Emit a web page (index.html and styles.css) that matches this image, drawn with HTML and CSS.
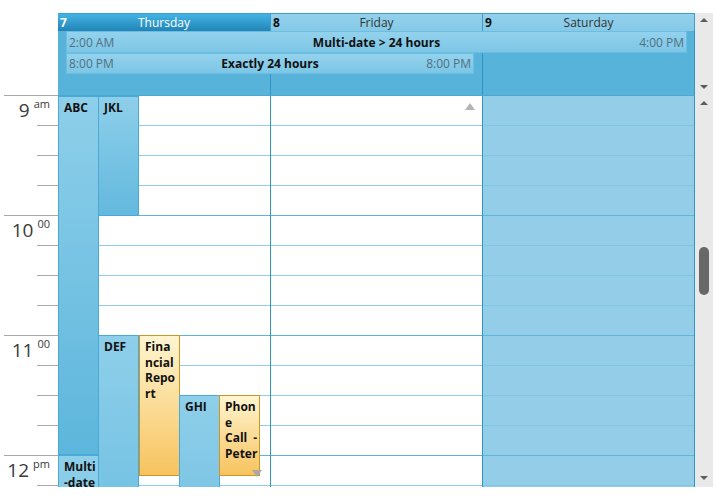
FILE: index.html
```html
<!DOCTYPE html>
<html>
<head>
<meta charset="utf-8">
<link rel="stylesheet" href="styles.css">
</head>
<body>
<div class="cal">
  <div class="top">
    <div class="corner"></div>
    <div class="topbox">
      <div class="heads">
        <div class="dh sel w1"><span class="num">7</span><span class="name">Thursday</span><span></span></div>
        <div class="dh w2"><span class="num">8</span><span class="name">Friday</span><span></span></div>
        <div class="dh w2"><span class="num">9</span><span class="name">Saturday</span><span></span></div>
      </div>
      <div class="allday">
        <div class="adc w1"></div>
        <div class="adc w2"></div>
        <div class="adc w2"></div>
        <div class="aev ev1"><span class="t">2:00 AM</span><span class="ttl">Multi-date &gt; 24 hours</span><span class="t end">4:00 PM</span></div>
        <div class="aev ev2"><span class="t">8:00 PM</span><span class="ttl">Exactly 24 hours</span><span class="t end">8:00 PM</span></div>
      </div>
    </div>
    <div class="sb sb-top"><span class="arr up"></span><span class="arr down"></span></div>
  </div>
  <div class="main">
    <div class="times">
      <div class="hr"><div class="q first"><span class="big">9</span><span class="sup">am</span></div><div class="q"></div><div class="q"></div><div class="q"></div></div>
      <div class="hr"><div class="q first"><span class="big">10</span><span class="sup">00</span></div><div class="q"></div><div class="q"></div><div class="q"></div></div>
      <div class="hr"><div class="q first"><span class="big">11</span><span class="sup">00</span></div><div class="q"></div><div class="q"></div><div class="q"></div></div>
      <div class="hr"><div class="q first"><span class="big">12</span><span class="sup">pm</span></div><div class="q"></div><div class="q"></div><div class="q"></div></div>
    </div>
    <div class="grid">
      <div class="col w1">
        <div class="slot"></div><div class="slot"></div><div class="slot"></div><div class="slot h"></div>
        <div class="slot"></div><div class="slot"></div><div class="slot"></div><div class="slot h"></div>
        <div class="slot"></div><div class="slot"></div><div class="slot"></div><div class="slot h"></div>
        <div class="slot"></div><div class="slot"></div>
        <div class="ev abc">ABC</div>
        <div class="ev jkl">JKL</div>
        <div class="ev def">DEF</div>
        <div class="ev y fin">Financial Report</div>
        <div class="ev ghi">GHI</div>
        <div class="ev y phone">Phone Call - Peter</div>
        <div class="ev multi">Multi-date</div>
        <span class="more down"></span>
      </div>
      <div class="col w2">
        <div class="slot"></div><div class="slot"></div><div class="slot"></div><div class="slot h"></div>
        <div class="slot"></div><div class="slot"></div><div class="slot"></div><div class="slot h"></div>
        <div class="slot"></div><div class="slot"></div><div class="slot"></div><div class="slot h"></div>
        <div class="slot"></div><div class="slot"></div>
        <span class="more up"></span>
      </div>
      <div class="col w2 off">
        <div class="slot"></div><div class="slot"></div><div class="slot"></div><div class="slot h"></div>
        <div class="slot"></div><div class="slot"></div><div class="slot"></div><div class="slot h"></div>
        <div class="slot"></div><div class="slot"></div><div class="slot"></div><div class="slot h"></div>
        <div class="slot"></div><div class="slot"></div>
      </div>
    </div>
    <div class="sb sb-main"><span class="arr up"></span><span class="thumb"></span><span class="arr down"></span></div>
  </div>
</div>
</body>
</html>
```
FILE: styles.css
```css
html, body {
  margin: 0;
  padding: 0;
  background: #fff;
}
body {
  width: 715px;
  height: 500px;
  overflow: hidden;
  font-family: "Open Sans", "Noto Sans", sans-serif;
  font-size: 12px;
  color: #333;
}
.cal {
  padding-top: 13px;
}
.top {
  display: flex;
  height: 82px;
}
.corner {
  width: 58px;
  flex: none;
}
.topbox {
  width: 637px;
  flex: none;
  display: flex;
  flex-direction: column;
}
.w1 { width: 213px; }
.w2 { width: 212px; }
.heads {
  display: flex;
  height: 18px;
  box-sizing: border-box;
  border-top: 1px solid #3a9fcf;
}
.dh {
  box-sizing: border-box;
  border-right: 1px solid #3a9fcf;
  display: grid;
  grid-template-columns: 1fr auto 1fr;
  align-items: center;
  line-height: 17px;
  background: linear-gradient(#93d1ec, #85c9e7);
  color: #333;
}
.dh .num {
  font-weight: bold;
  color: #111;
  padding-left: 2px;
  justify-self: start;
}
.dh.sel {
  background: linear-gradient(#43b4e5, #2283b6);
  color: #fff;
}
.dh.sel .num { color: #fff; }
.allday {
  position: relative;
  display: flex;
  height: 64px;
  background: #58b3da;
}
.adc {
  box-sizing: border-box;
  border-right: 1px solid #2f95c8;
}
.aev {
  position: absolute;
  box-sizing: border-box;
  display: grid;
  grid-template-columns: 1fr auto 1fr;
  align-items: center;
  padding: 0 2px;
  border: 1px solid #6bbde2;
  background: linear-gradient(#93d2ed, #7dc6e6);
  color: #111;
}
.aev .t {
  color: #50707f;
  justify-self: start;
}
.aev .t.end { justify-self: end; }
.aev .ttl { font-weight: bold; }
.ev1 { left: 8px; top: 0; width: 621px; height: 22px; }
.ev2 { left: 8px; top: 22px; width: 408px; height: 21px; }

.sb {
  width: 18px;
  flex: none;
  background: #e9e9e9;
  display: flex;
  flex-direction: column;
  align-items: center;
}
.arr {
  width: 0;
  height: 0;
  border-left: 4px solid transparent;
  border-right: 4px solid transparent;
}
.arr.up { border-bottom: 4px solid #5c5c5c; }
.arr.down { border-top: 4px solid #5c5c5c; margin-top: auto; }
.sb-top .arr.up { margin-top: 5px; }
.sb-top .arr.down { margin-bottom: 6px; }
.sb-main .arr.up { margin-top: 6px; }
.sb-main .arr.down { margin-bottom: 7px; }
.thumb {
  margin-top: 142px;
  width: 10px;
  height: 48px;
  border-radius: 5px;
  background: #686868;
}

.main {
  display: flex;
  height: 392px;
}
.times {
  width: 58px;
  flex: none;
  height: 392px;
  overflow: hidden;
}
.hr {
  height: 120px;
}
.q {
  height: 30px;
  box-sizing: border-box;
  border-top: 1px solid #a9a9a9;
  margin-left: 37px;
}
.q.first {
  margin-left: 4px;
  display: flex;
  justify-content: flex-end;
  align-items: flex-start;
  padding-right: 8px;
  color: #3a3a3a;
}
.big {
  font-size: 19px;
  line-height: 22px;
  margin-top: 3px;
}
.sup {
  font-size: 11px;
  line-height: 14px;
  margin-left: 4px;
  margin-top: 1px;
}
.grid {
  width: 637px;
  flex: none;
  height: 392px;
  box-sizing: border-box;
  border-top: 1px solid #4aa7d3;
  display: flex;
  overflow: hidden;
}
.col {
  position: relative;
  box-sizing: border-box;
  border-right: 1px solid #2e96cb;
  flex: none;
}
.slot {
  height: 30px;
  box-sizing: border-box;
  border-bottom: 1px solid #91cde6;
}
.slot.h { border-bottom-color: #5cb4da; }
.col.off { background: #93cde7; }
.col.off .slot { border-bottom-color: #82c5e2; }
.col.off .slot.h { border-bottom-color: #5fb5dc; }

.ev {
  position: absolute;
  box-sizing: border-box;
  width: 41px;
  border: 1px solid #4aa9d7;
  background: linear-gradient(#8ecfea, #5db6dc);
  padding: 3px 2px 0 5px;
  font-weight: bold;
  font-size: 12px;
  line-height: 15.5px;
  color: #111;
  overflow-wrap: anywhere;
  overflow: hidden;
}
.ev.y {
  background: linear-gradient(#fff5d0, #f7c35e);
  border-color: #cc9525;
}
.abc { left: 0; top: 0; height: 359px; }
.jkl { left: 40px; top: 0; height: 120px; background: linear-gradient(#8ecfea, #63b9de); }
.def { left: 40px; top: 239px; height: 170px; background: linear-gradient(#8ecfea, #74c2e3); }
.fin { left: 81px; top: 239px; height: 141px; }
.ghi { left: 121px; top: 299px; height: 110px; background: linear-gradient(#8ecfea, #7cc5e5); }
.phone {
  left: 161px;
  top: 299px;
  height: 81px;
  padding-right: 0;
  word-spacing: 3px;
}
.multi {
  left: 0;
  top: 359px;
  height: 50px;
  padding-right: 0;
  background: linear-gradient(#8ecfea, #86cbe8);
}
.more {
  position: absolute;
  width: 0;
  height: 0;
  border-left: 5px solid transparent;
  border-right: 5px solid transparent;
}
.more.down {
  left: 194px;
  top: 374px;
  border-top: 7px solid #a9a9a9;
}
.more.up {
  left: 194px;
  top: 7px;
  border-bottom: 7px solid #b4b4b4;
}
```
